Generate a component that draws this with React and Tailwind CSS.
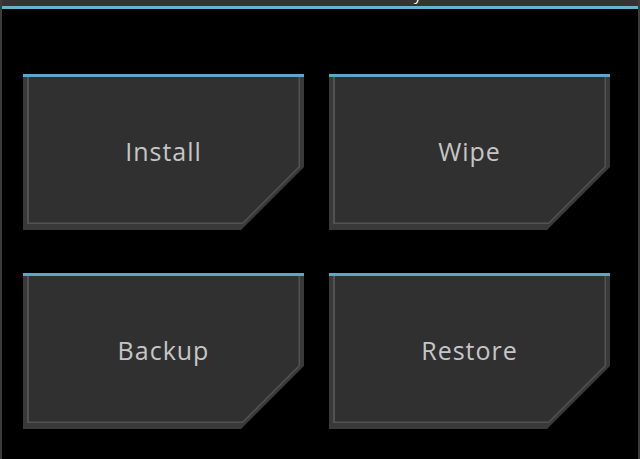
import React from "react";

function TileButton({ label }) {
  return (
    <div className="flex w-[281px] flex-col">
      <div className="h-[3px] bg-[#5ca6c6]" />
      <div className="flex h-[153px] flex-col bg-[#393939] px-[4px] pb-[6px] [clip-path:polygon(0_0,100%_0,100%_calc(100%-63px),calc(100%-63px)_100%,0_100%)]">
        <div className="flex flex-1 flex-col bg-[#525252] px-[1.5px] pb-[1.5px] [clip-path:polygon(0_0,100%_0,100%_calc(100%-57px),calc(100%-57px)_100%,0_100%)]">
          <div className="flex flex-1 items-center justify-center bg-[#303030] pt-[4px] [clip-path:polygon(0_0,100%_0,100%_calc(100%-56px),calc(100%-56px)_100%,0_100%)]">
            <span className="font-['Open_Sans',sans-serif] text-[25px] tracking-[1px] text-[#c6c6c6]">
              {label}
            </span>
          </div>
        </div>
      </div>
    </div>
  );
}

export default function App() {
  return (
    <div className="flex h-[459px] w-[640px] flex-col overflow-hidden border-x-2 border-x-[#3c3c3c] bg-black">
      <div className="relative h-[6px] overflow-hidden bg-[#343434]">
        <span className="absolute bottom-[4px] left-[356px] font-['Open_Sans',sans-serif] text-[15px] leading-none text-white">
          Recovery
        </span>
      </div>
      <div className="h-[3px] bg-[#6ab1cd]" />
      <div className="grid grid-cols-[281px_281px] gap-x-[25px] gap-y-[43px] pl-[21px] pt-[65px]">
        <TileButton label="Install" />
        <TileButton label="Wipe" />
        <TileButton label="Backup" />
        <TileButton label="Restore" />
      </div>
    </div>
  );
}
